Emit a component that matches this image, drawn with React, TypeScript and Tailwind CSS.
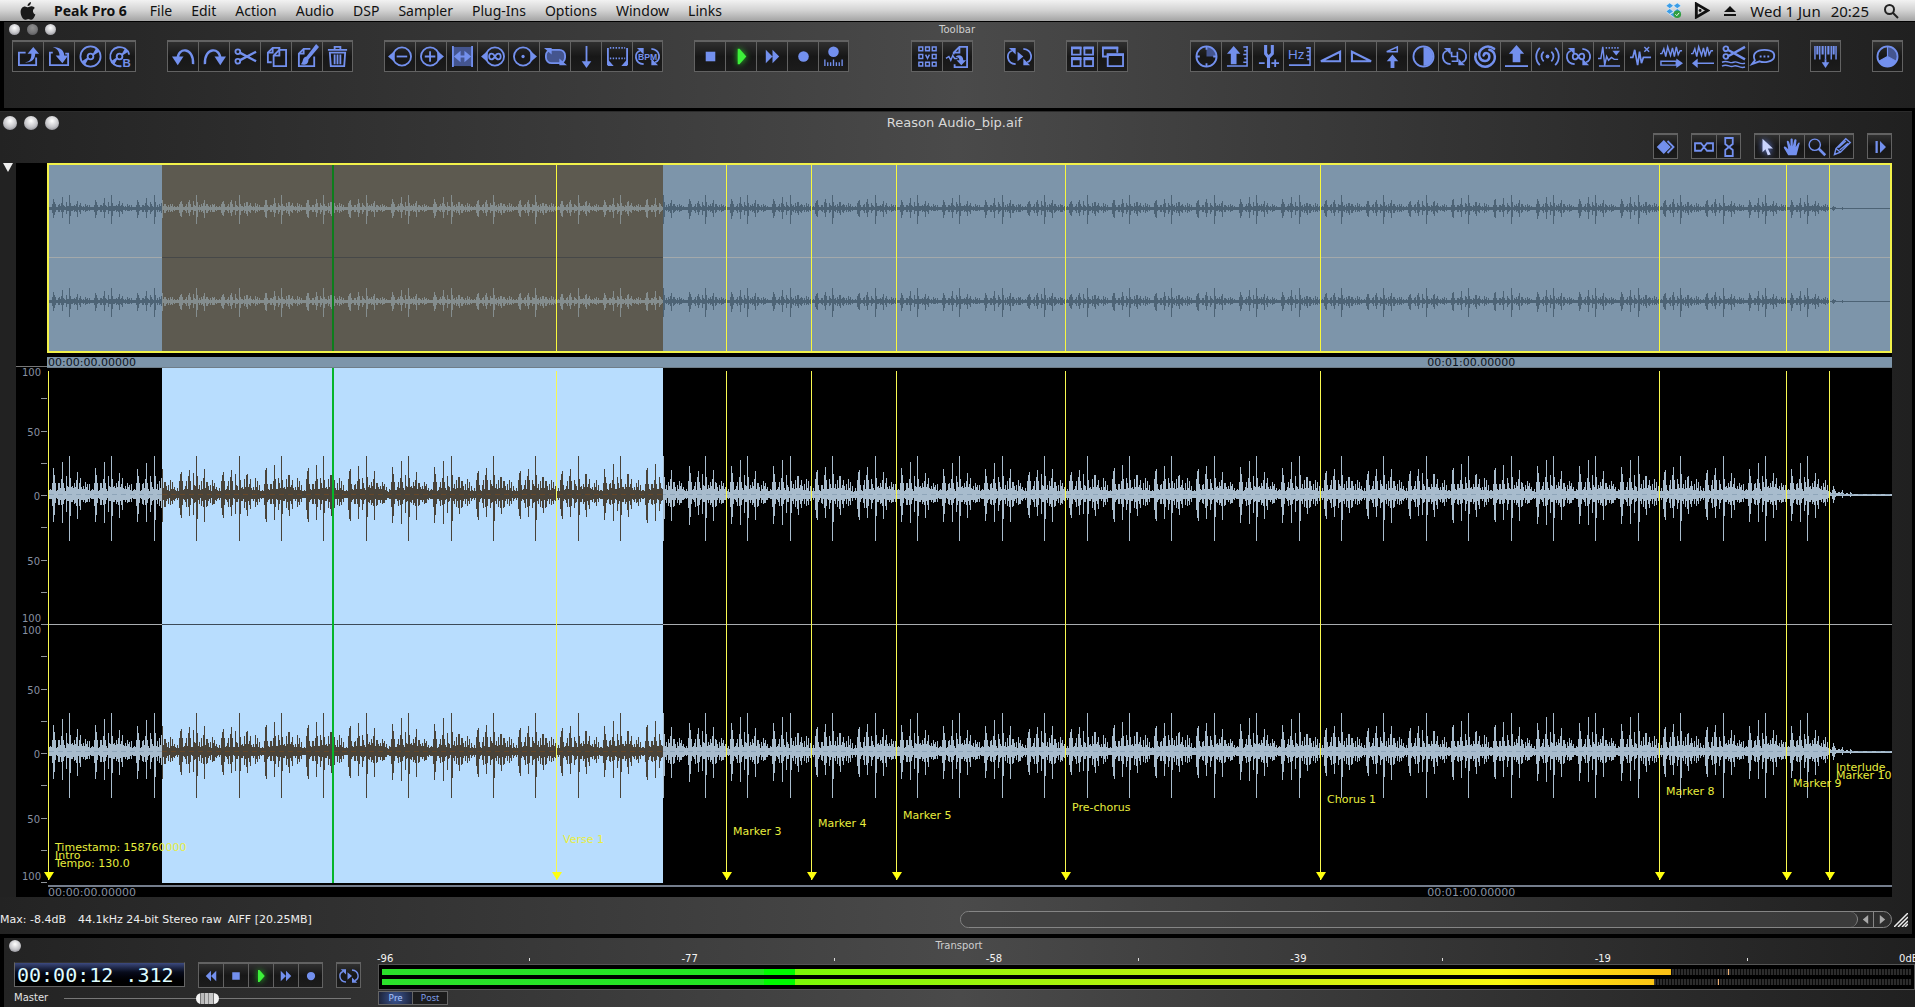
import { useState } from 'react';
import type { ReactNode } from 'react';

interface Marker {
  x: number;
  labels: { text: string; bottom: number }[];
}

interface IconProps {
  name: string;
  className?: string;
}

// Everything on the timeline is measured in these units
const TRACK = 1845;
const SELECTION = { start: 115, end: 616 };
const PLAYHEAD = 286;
const BAR = 42.4;

const markers: Marker[] = [
  {
    x: 1,
    labels: [
      { text: 'Timestamp: 158760000', bottom: 31 },
      { text: 'Intro', bottom: 23 },
      { text: 'Tempo: 130.0', bottom: 15 },
    ],
  },
  { x: 509, labels: [{ text: 'Verse 1', bottom: 39 }] },
  { x: 679, labels: [{ text: 'Marker 3', bottom: 47 }] },
  { x: 764, labels: [{ text: 'Marker 4', bottom: 55 }] },
  { x: 849, labels: [{ text: 'Marker 5', bottom: 63 }] },
  { x: 1018, labels: [{ text: 'Pre-chorus', bottom: 71 }] },
  { x: 1273, labels: [{ text: 'Chorus 1', bottom: 79 }] },
  { x: 1612, labels: [{ text: 'Marker 8', bottom: 87 }] },
  { x: 1739, labels: [{ text: 'Marker 9', bottom: 95 }] },
  {
    x: 1782,
    labels: [
      { text: 'Interlude', bottom: 111 },
      { text: 'Marker 10', bottom: 103 },
    ],
  },
];

// Peak levels of one bar of the loop
const peaksUp = [
  39, 18, 7, 10, 6, 14, 8, 18, 23, 7, 12, 15, 8, 5, 10, 5, 15, 8, 13, 5, 9, 4, 4, 6, 4, 14, 26, 24, 12, 5, 5, 10, 13, 6,
  18, 31, 14, 6, 5, 19, 11, 8, 5,
];
const peaksDown = [
  46, 24, 7, 9, 5, 12, 8, 14, 25, 6, 12, 14, 6, 5, 9, 5, 11, 8, 10, 5, 7, 4, 4, 5, 4, 14, 27, 25, 9, 5, 5, 9, 12, 5, 12,
  27, 11, 5, 5, 18, 9, 7, 5,
];

const wavePath = (from: number, to: number, center: number, scale: number) => {
  let d = '';
  for (let x = Math.max(from, 2); x < to; x++) {
    const phase = Math.floor((((x - 64) % BAR) + BAR) % BAR);
    const wobble = phase === 0 ? 1 : 0.75 + ((x * 7919) % 31) / 80;
    const fade = x < 1782 ? 1 : Math.exp((1782 - x) / 10) * 0.5;
    const up = Math.max(peaksUp[phase] * wobble * fade * scale, 0.5);
    const down = Math.max(peaksDown[phase] * wobble * fade * scale, 0.5);
    d += `M${x + 0.5} ${Math.round(center - up)}V${Math.round(center + down)}`;
  }
  return d;
};

const percent = (x: number) => `${(x / TRACK) * 100}%`;

const loopArrows = (
  <>
    <path d="M8 20C-2 19-2 8 4 6M16 4C26 5 26 16 20 18" />
    <path d="M1 3h7v7zM23 21h-7v-7z" fill="currentColor" stroke="none" />
  </>
);

const infinity = <path d="M12 12c-2-4-6-4-6 0s4 4 6 0 6-4 6 0-4 4-6 0z" />;

const icons: Record<string, ReactNode> = {
  open: (
    <>
      <path d="M9 8H2v13h18v-8" />
      <path d="M7 18c6 0 8-3 8-9h-4l6-7 6 7h-4c0 6-4 10-12 9z" fill="currentColor" stroke="none" />
    </>
  ),
  save: (
    <>
      <path d="M5 8H2v13h19V9h-3" />
      <path d="M5 2c8 0 12 4 12 9h4l-6 8-7-8h4c0-4-2-7-7-9z" fill="currentColor" stroke="none" />
    </>
  ),
  disc: (
    <>
      <circle cx="12" cy="12" r="10.500" />
      <circle cx="12" cy="12" r="3" />
      <path d="M14 10l4-7 3 4-6 4zM10 14l-4 7-3-4 6-4z" fill="currentColor" stroke="none" />
    </>
  ),
  burn: (
    <>
      <path d="M13 22A10 10 0 1 1 21 10" />
      <circle cx="11" cy="12" r="3" />
      <path d="M13 10l4-7 3 4-6 4zM9 14l-4 7-3-4 6-4z" fill="currentColor" stroke="none" />
      <text x="14" y="23" fontSize="12" fontWeight="700" fill="currentColor" stroke="none">B</text>
    </>
  ),
  undo: (
    <>
      <path d="M22 20C23 2 6 2 6 14" strokeWidth="2.500" />
      <path d="M0 12h12l-6 9z" fill="currentColor" stroke="none" />
    </>
  ),
  redo: (
    <>
      <path d="M2 20C1 2 18 2 18 14" strokeWidth="2.500" />
      <path d="M24 12H12l6 9z" fill="currentColor" stroke="none" />
    </>
  ),
  cut: (
    <>
      <circle cx="4" cy="7" r="2.500" />
      <circle cx="4" cy="17" r="2.500" />
      <path d="M6 8l17 9M6 16l17-9" strokeWidth="2.500" />
    </>
  ),
  copy: (
    <>
      <path d="M7 18H3V8l5-5h7v3" />
      <path d="M15 5h7v17H9V11zM15 5v6H9M8 3v5H3" />
    </>
  ),
  paste: (
    <>
      <path d="M15 4H8L3 9v13h16V12M8 4v5H3" />
      <path d="M21-1l3 3-11 13c0 6-5 6-8 5 3-2 1-7 6-8z" fill="currentColor" stroke="none" />
    </>
  ),
  trash: (
    <>
      <path d="M2 5h20M9 5V2h6v3M4 8h16l-1 14H5z" />
      <path d="M9 10v10M12 10v10M15 10v10" />
    </>
  ),
  zoomOut: (
    <>
      <circle cx="13.500" cy="12" r="9.500" />
      <path d="M8 12h11" />
      <path d="M6 6v12l-7-6z" fill="currentColor" stroke="none" />
    </>
  ),
  zoomIn: (
    <>
      <circle cx="10.500" cy="12" r="9.500" />
      <path d="M5 12h11M10.500 6.500v11" />
      <path d="M18 6v12l7-6z" fill="currentColor" stroke="none" />
    </>
  ),
  fit: (
    <>
      <path d="M2 2h20v20H2z" fill="#44558f" stroke="none" />
      <path d="M2 1v22M22 1v22" />
      <path d="M3 12l7-6v5h4V6l7 6-7 6v-5h-4v5z" fill="currentColor" stroke="none" />
    </>
  ),
  zoomLoop: (
    <>
      <circle cx="13.500" cy="12" r="9.500" />
      <path d="M6 6v12l-7-6z" fill="currentColor" stroke="none" />
      <g transform="translate(1.500 0)">{infinity}</g>
    </>
  ),
  zoomPoint: (
    <>
      <circle cx="10.500" cy="12" r="9.500" />
      <circle cx="10.500" cy="12" r="1.700" fill="currentColor" stroke="none" />
      <path d="M18 6v12l7-6z" fill="currentColor" stroke="none" />
    </>
  ),
  loop: (
    <>
      <rect x="2" y="5" width="20" height="14" rx="6" fill="#44558f" />
      <path d="M0 3h8v7zM24 21h-8v-7z" fill="currentColor" stroke="none" />
    </>
  ),
  anchor: (
    <>
      <path d="M12 1v18" />
      <path d="M7 17h10l-5 7z" fill="currentColor" stroke="none" />
    </>
  ),
  region: (
    <>
      <path d="M2 3v18M22 3v18" />
      <path d="M4 3h16M4 14h16" strokeDasharray="1.500 1.500" />
      <path d="M2 15l6 7H2zM22 15l-6 7h6z" fill="currentColor" stroke="none" />
    </>
  ),
  bpm: (
    <>
      {loopArrows}
      <text x="12" y="15.500" fontSize="9" fontWeight="700" textAnchor="middle" fill="currentColor" stroke="none">BPM</text>
    </>
  ),
  stop: <path d="M7 7h10v10H7z" fill="currentColor" stroke="none" />,
  play: <path d="M8 4h2l7 8-7 8H8z" fill="currentColor" stroke="none" />,
  forward: <path d="M5 5l7 7-7 7zM12 5l7 7-7 7z" fill="currentColor" stroke="none" />,
  rewind: <path d="M12 5l-7 7 7 7zM19 5l-7 7 7 7z" fill="currentColor" stroke="none" />,
  record: <circle cx="12" cy="12" r="5.500" fill="currentColor" stroke="none" />,
  recordSettings: (
    <>
      <circle cx="12" cy="7" r="5.500" fill="currentColor" stroke="none" />
      <path d="M3 15v7M6 18v4M9 18v4M12 15v7M15 18v4M18 18v4M21 15v7" strokeWidth="1.400" />
    </>
  ),
  playlist: (
    <>
      <path d="M3 2h4v4H3zM10 2h4v4h-4zM17 2h4v4h-4zM3 10h4v4H3zM17 10h4v4h-4zM3 18h4v4H3zM10 18h4v4h-4zM17 18h4v4h-4z" strokeWidth="1.500" />
      <path d="M10 10l2 4 2-4" strokeWidth="1.500" />
    </>
  ),
  toPlaylist: (
    <>
      <path d="M8 10V8l6-6h8v21H9v-3M14 2v6H8" />
      <path d="M0 14l3-2 2 4 2-5 2 3h3" strokeWidth="1.500" />
      <path d="M10 12c5-3 8 0 8 4h3l-5 5-5-5h3c0-2-1-3-4-4z" fill="currentColor" stroke="none" />
    </>
  ),
  loopPlay: (
    <>
      {loopArrows}
      <path d="M10 7v10l6-5z" fill="currentColor" stroke="none" />
    </>
  ),
  tile: (
    <>
      <path d="M1 3h9v7H1zM14 3h9v7h-9zM1 15h9v7H1zM14 15h9v7h-9z" />
      <path d="M0 3h11M13 3h11M0 14h11M13 14h11" strokeWidth="3" />
    </>
  ),
  stack: (
    <>
      <path d="M8 12H2V3h15v5" />
      <path d="M7 10h16v12H7z" />
      <path d="M1 3h17M6 10h18" strokeWidth="3" />
    </>
  ),
  clock: (
    <>
      <path d="M12 12V2a10 10 0 0 1 10 10z" fill="#44558f" stroke="none" />
      <circle cx="12" cy="12" r="10.500" />
      <path d="M12 1v4M12 19v4M1 12h4M19 12h4" />
    </>
  ),
  gain: (
    <>
      <path d="M8 1l7 8h-4v11H5V9H1z" fill="currentColor" stroke="none" />
      <path d="M1 22h21V1M18 2h4M19 6h3M18 10h4M19 14h3M18 18h4" strokeWidth="1.600" />
    </>
  ),
  pitch: (
    <>
      <path d="M9 0v9l3 4 4-4V0M12 12v12" strokeWidth="3.200" />
      <path d="M2 19h6M15 19h8M19 15v8" />
    </>
  ),
  rate: (
    <>
      <text x="0" y="15" fontSize="14" fill="currentColor" stroke="none">Hz</text>
      <path d="M1 21h22V2M19 3h4M20 7h3M19 11h4M20 15h3" strokeWidth="1.600" />
    </>
  ),
  fadeIn: <path d="M2 17h20V7z" strokeWidth="2.200" />,
  fadeOut: <path d="M22 17H2V7z" strokeWidth="2.200" />,
  mix: (
    <>
      <path d="M6 7h11V2z" strokeWidth="1.600" />
      <path d="M12 10l6 7h-4v7h-4v-7H6z" fill="currentColor" stroke="none" />
    </>
  ),
  invert: (
    <>
      <circle cx="12" cy="12" r="10.500" />
      <path d="M12 2a10 10 0 0 1 0 20z" fill="currentColor" stroke="none" />
    </>
  ),
  crossfade: (
    <>
      {loopArrows}
      <path d="M9 7v5h6V7M15 12v5H9" strokeWidth="1.700" />
    </>
  ),
  swirl: (
    <g strokeWidth="2.600" strokeLinecap="round">
      <path d="M21 4C13-2 3 5 6 13c2 5 10 5 10-1 0-4-5-5-6-1" />
      <path d="M2 9c-3 9 7 17 15 12 7-5 6-14-1-16" />
    </g>
  ),
  normalize: (
    <>
      <path d="M12 0l8 9h-4v9H8V9H4z" fill="currentColor" stroke="none" />
      <path d="M0 22h24" />
    </>
  ),
  reverb: (
    <>
      <circle cx="12" cy="12" r="2" fill="currentColor" stroke="none" />
      <path d="M8 7c-3 3-3 7 0 10M16 7c3 3 3 7 0 10M4 3c-5 5-5 13 0 18M20 3c5 5 5 13 0 18" />
    </>
  ),
  loopTune: (
    <>
      {loopArrows}
      {infinity}
    </>
  ),
  threshold: (
    <>
      <path d="M0 14h3l2-12 2 19 2-9 2 4 3-3 3 2h4M1 22h22" strokeWidth="1.500" />
      <path d="M8 3h15" strokeDasharray="1.500 1.500" />
      <path d="M15 6h8l-4 5z" fill="currentColor" stroke="none" />
    </>
  ),
  repair: (
    <>
      <path d="M1 13h3l2-8 3 16 2-14 2 12 2-6h8" strokeWidth="1.800" />
      <path d="M16 2l5 5M21 2l-5 5" strokeWidth="1.500" />
    </>
  ),
  waveRight: (
    <>
      <path d="M0 9h2l2-5 2 8 2-10 3 9 2-8 2 9 2-10 2 8 2-4h2M1 17h16v4H1z" strokeWidth="1.500" />
      <path d="M17 14l7 5-7 5z" fill="currentColor" stroke="none" />
    </>
  ),
  waveLeft: (
    <>
      <path d="M0 9h2l2-5 2 8 2-10 3 9 2-8 2 9 2-10 2 8 2-4h2M6 19h18" strokeWidth="1.500" />
      <path d="M7 14v10l-6-5z" fill="currentColor" stroke="none" />
    </>
  ),
  strip: (
    <>
      <circle cx="4" cy="4" r="2.500" />
      <circle cx="4" cy="12" r="2.500" />
      <path d="M6 5l18 10M6 12l18-10" strokeWidth="2.500" />
      <path d="M0 18c6-3 8 2 12 0s6 3 12 1M0 22c6-3 8 2 12 0s6 3 12 1" strokeWidth="1.500" />
    </>
  ),
  speech: (
    <>
      <path d="M3 16c-3-6 1-11 10-11s11 4 10 8-10 6-15 4l-8 3z" />
      <path d="M8 12h2M12 12h2M16 12h2" />
    </>
  ),
  sampler: (
    <>
      <path d="M1 1v14M6 1v14M12 1v14M18 1v14M23 1v14" strokeWidth="1.500" />
      <path d="M3.500 1v9M9 1v9M15 1v9M20.500 1v9" strokeWidth="2.200" />
      <path d="M12 15v4" />
      <path d="M8 18h8l-4 6z" fill="currentColor" stroke="none" />
    </>
  ),
  usage: (
    <>
      <path d="M12 12V2a10 10 0 0 1 9 15z" fill="#44558f" stroke="none" />
      <path d="M12 12l9 5a10 10 0 0 1-18 0z" fill="currentColor" stroke="none" />
      <circle cx="12" cy="12" r="10.500" />
      <path d="M12 12V2M12 12l9 5M12 12l-9 5" strokeWidth="1.200" />
    </>
  ),
  dither: (
    <>
      <path d="M9 4l8 8-8 8-8-8z" fill="currentColor" />
      <path d="M14 4l8 8-8 8" strokeWidth="2.500" />
    </>
  ),
  linkH: <path d="M12 12L8 7H0v10h8l8-10h8v10h-8z" strokeWidth="2.400" />,
  linkV: <path d="M12 12L7 8V0h10v8L7 16v8h10v-8z" strokeWidth="2.400" />,
  pointer: <path d="M6 1l14 13h-7l4 8-4 1-3-8-4 4z" fill="currentColor" stroke="none" />,
  hand: (
    <path
      d="M7 23L1 13c0-2 2-2 3-1l3 3L5 5c0-2 2-2 3 0l2 6V2c0-2 3-2 3 0v9l2-8c0-2 3-2 3 0l-1 9 3-5c1-2 3-1 2 1l-4 15z"
      fill="currentColor"
      stroke="none"
    />
  ),
  zoom: (
    <>
      <circle cx="9" cy="9" r="7.500" />
      <path d="M14 14l9 9" strokeWidth="3.500" />
    </>
  ),
  pencil: <path d="M2 22l2-8L17 1l6 5-13 13zM4 14l6 5M7 13l10-9M9 16l11-9" />,
  collapse: <path d="M6 4h3v16H6zM12 4l8 8-8 8z" fill="currentColor" stroke="none" />,
};

const fileTools = ['open', 'save', 'disc', 'burn'];
const editTools = ['undo', 'redo', 'cut', 'copy', 'paste', 'trash'];
const viewTools = ['zoomOut', 'zoomIn', 'fit', 'zoomLoop', 'zoomPoint', 'loop', 'anchor', 'region', 'bpm'];
const playTools = ['stop', 'play', 'forward', 'record', 'recordSettings'];
const dspTools = [
  'clock', 'gain', 'pitch', 'rate', 'fadeIn', 'fadeOut', 'mix', 'invert', 'crossfade', 'swirl', 'normalize', 'reverb',
  'loopTune', 'threshold', 'repair', 'waveRight', 'waveLeft', 'strip', 'speech',
];

const menus = ['File', 'Edit', 'Action', 'Audio', 'DSP', 'Sampler', 'Plug-Ins', 'Options', 'Window', 'Links'];

function Icon({ name, className = '' }: IconProps) {
  return (
    <svg
      viewBox="0 0 24 24"
      className={`shrink-0 overflow-visible ${className}`}
      fill="none"
      stroke="currentColor"
      strokeWidth="1.900"
      fontFamily="Liberation Sans, sans-serif"
      aria-hidden="true"
    >
      {icons[name]}
    </svg>
  );
}

function ToolGroup({ names, small = false }: { names: string[]; small?: boolean }) {
  return (
    <div className="flex shrink-0">
      {names.map((name) => (
        <button
          key={name}
          aria-label={name}
          className={`flex items-center justify-center border-t-2 border-b border-l border-[#626262] bg-gradient-to-b from-[#303030] via-[#171717] to-[#1c1c1c] last:border-r ${
            small ? 'h-[26px] w-[25px]' : 'h-8 w-[31px]'
          } ${
            name === 'play'
              ? 'text-[#3df03a] [&>svg]:drop-shadow-[0_0_3px_#2bd02b]'
              : name === 'pointer'
              ? 'text-[#c9d4ff] [&>svg]:drop-shadow-[0_0_3px_#6f8cf0]'
              : 'text-[#7390ee]'
          }`}
        >
          <Icon name={name} className={small ? 'size-[18px]' : 'size-[23px]'} />
        </button>
      ))}
    </div>
  );
}

function Light({ className = '' }: { className?: string }) {
  return (
    <button
      aria-label="Window control"
      className={`rounded-full bg-[radial-gradient(circle_at_50%_35%,#ffffff,#c4c4c8_55%,#707078)] ${className}`}
    />
  );
}

function MenuBar() {
  return (
    <header className="flex h-[22px] items-center border-b border-black bg-gradient-to-b from-[#f2f2f2] via-[#d2d2d2] to-[#a4a4a4] pr-4 pl-5 text-[14px] leading-5 whitespace-nowrap text-[#111]">
      <svg viewBox="0 0 16 18" className="mr-[18px] h-[18px] w-4" fill="#1a1a1a" aria-hidden="true">
        <path d="M11 0c0 2-1 4-3.500 4C7.500 2 9 .5 11 0zM8 5.200c1 0 2-1 3.700-.9 1.300.1 2.400.7 3.100 1.700-2.700 1.700-2.300 5.300.6 6.500C14.600 15 13 17.700 11.500 17.700c-1.300 0-1.700-.8-3.200-.8s-2 .8-3.200.8C3 17.700.6 13.600.6 10 .6 6.500 2.700 4.400 4.900 4.400c1.300 0 2.300.8 3.100.8z" />
      </svg>
      <nav className="flex items-center gap-[19px]">
        <button className="mr-1 font-bold">Peak Pro 6</button>
        {menus.map((menu) => (
          <button key={menu}>{menu}</button>
        ))}
      </nav>
      <div className="ml-auto flex items-center">
        <svg viewBox="0 0 18 18" className="mr-3 size-[17px]" aria-hidden="true">
          <path d="M5 1l4 3-4 3-4-3zM13 1l4 3-4 3-4-3zM5 7l4 3-4 3-4-3zM13 7l4 3-4 3-4-3zM5 13l4-2 4 2-4 3z" fill="#3b9de6" stroke="#e6f4ff" strokeWidth=".6" />
          <circle cx="13" cy="13" r="4" fill="#2f9e3f" />
          <path d="M11 13l1.500 1.500L15 11.500" stroke="#fff" fill="none" />
        </svg>
        <svg viewBox="0 0 16 18" className="mr-[14px] h-[17px] w-4" aria-hidden="true">
          <path d="M2 2l12 7-12 7z" fill="none" stroke="#111" strokeWidth="3" />
          <circle cx="6" cy="9" r="1.500" fill="#111" />
        </svg>
        <svg viewBox="0 0 12 12" className="mr-[14px] size-3" fill="#111" aria-hidden="true">
          <path d="M6 1l6 6H0zM0 9h12v2H0z" />
        </svg>
        <span className="mr-[14px] text-[15px]">
          Wed 1 Jun<span className="ml-[10px]">20:25</span>
        </span>
        <button aria-label="Search">
          <svg viewBox="0 0 16 16" className="size-4" fill="none" stroke="#222" strokeWidth="2" aria-hidden="true">
            <circle cx="6.500" cy="6.500" r="4.500" />
            <path d="M10 10l5 5" />
          </svg>
        </button>
      </div>
    </header>
  );
}

function ToolbarWindow() {
  return (
    <section className="ml-1 h-[86px] overflow-hidden bg-gradient-to-r from-[#232323] via-[#4a4a4a] to-[#202020]">
      <div className="grid h-[18px] grid-cols-3 items-center pr-[10px] pb-[3px] pl-[5px]">
        <div className="flex gap-[7px]">
          <Light className="size-[11px]" />
          <Light className="size-[11px] opacity-50" />
          <Light className="size-[11px]" />
        </div>
        <h2 className="text-center font-['DejaVu_Sans',sans-serif] text-[10px] leading-3 text-[#cfcfcf]">Toolbar</h2>
      </div>
      <div className="flex gap-[31px] pr-3 pl-2">
        <ToolGroup names={fileTools} />
        <ToolGroup names={editTools} />
        <ToolGroup names={viewTools} />
        <ToolGroup names={playTools} />
        <div className="ml-[31px] flex gap-[31px]">
          <ToolGroup names={['playlist', 'toPlaylist']} />
          <ToolGroup names={['loopPlay']} />
          <ToolGroup names={['tile', 'stack']} />
        </div>
        <div className="ml-auto flex gap-[31px]">
          <ToolGroup names={dspTools} />
          <ToolGroup names={['sampler']} />
          <ToolGroup names={['usage']} />
        </div>
      </div>
    </section>
  );
}

function Overview() {
  return (
    <div className="relative h-[190px] bg-[#7d95aa]">
      <svg viewBox={`0 0 ${TRACK} 190`} preserveAspectRatio="none" className="absolute inset-0 size-full" shapeRendering="crispEdges" aria-hidden="true">
        <rect x={SELECTION.start} width={SELECTION.end - SELECTION.start} height="190" fill="#5d5a50" />
        <path d={`M0 94.500H${TRACK}`} stroke="#a3a9ab" />
        <path d={`M${SELECTION.start} 94.500H${SELECTION.end}`} stroke="#464848" />
        {[45.5, 138.5].map((center) => (
          <g key={center}>
            <path d={`M2 ${center}H${TRACK}`} stroke="#4d6375" />
            <path d={wavePath(0, SELECTION.start, center, 0.34)} stroke="#4d6375" />
            <path d={wavePath(SELECTION.start, SELECTION.end, center, 0.34)} stroke="#848d8e" />
            <path d={wavePath(SELECTION.end, TRACK, center, 0.34)} stroke="#4d6375" />
          </g>
        ))}
      </svg>
      {markers.slice(1).map((marker) => (
        <div key={marker.x} className="absolute inset-y-0 w-px bg-[#f8f83c]" style={{ left: percent(marker.x) }} />
      ))}
      <div className="absolute inset-y-0 w-[2px] -translate-x-px bg-[#0c7d1c]" style={{ left: percent(PLAYHEAD) }} />
      <div className="absolute inset-0 border-2 border-[#f2f24a]" />
    </div>
  );
}

function WaveEditor() {
  return (
    <div className="relative min-h-[360px] flex-1 bg-black">
      <svg viewBox={`0 0 ${TRACK} 515`} preserveAspectRatio="none" className="absolute inset-0 size-full" shapeRendering="crispEdges" aria-hidden="true">
        <rect x={SELECTION.start} width={SELECTION.end - SELECTION.start} height="515" fill="#b8ddfe" />
        <path d={`M0 256.500H${TRACK}`} stroke="#a9adb0" />
        <path d={`M${SELECTION.start} 256.500H${SELECTION.end}`} stroke="#3c4a58" />
        {[126.5, 383.5].map((center) => (
          <g key={center}>
            <path d={`M2 ${center}H${TRACK}`} stroke="#aabdce" strokeWidth="2" />
            <path d={wavePath(0, SELECTION.start, center, 1)} stroke="#a8bccd" />
            <path d={wavePath(SELECTION.start, SELECTION.end, center, 1)} stroke="#494339" />
            <path d={wavePath(SELECTION.end, TRACK, center, 1)} stroke="#a8bccd" />
            <path d={`M2 ${center}H${TRACK}`} stroke="#8ea5b9" strokeDasharray="5 4" />
            <path d={`M${SELECTION.start} ${center}H${SELECTION.end}`} stroke="#494339" />
            <path d={`M${SELECTION.start} ${center}H${SELECTION.end}`} stroke="#654729" strokeDasharray="5 4" />
          </g>
        ))}
      </svg>
      <div className="absolute inset-y-0 w-[2px] -translate-x-px bg-[#05b52a]" style={{ left: percent(PLAYHEAD) }} />
      {markers.map((marker) => (
        <div key={marker.x} className="absolute top-[3px] bottom-[3px] w-px bg-[#f8f850]" style={{ left: percent(marker.x) }}>
          <div className="absolute bottom-0 -left-1 border-x-[5px] border-t-8 border-x-transparent border-t-[#ffff10]" />
          {marker.labels.map((label) => (
            <span
              key={label.text}
              className="absolute left-[7px] font-['DejaVu_Sans',sans-serif] text-[11px] leading-3 whitespace-nowrap text-[#e8ee3e]"
              style={{ bottom: label.bottom - 5 }}
            >
              {label.text}
            </span>
          ))}
        </div>
      ))}
    </div>
  );
}

// One channel of the vertical level scale, from 100 down to 100
function LevelScale() {
  return (
    <div className="relative flex flex-1 flex-col items-end font-['DejaVu_Sans',sans-serif] text-[10px] leading-3">
      {['', '50', '', '0', '', '50', '', ''].map((label, index) => (
        <div key={index} className="relative flex w-full flex-1 items-end justify-end">
          <span className="absolute right-[7px] -bottom-[7px]">{label}</span>
          <span className="h-px w-[6px] bg-[#8f959c]" />
        </div>
      ))}
      <span className="absolute top-0 right-[6px]">100</span>
      <span className="absolute right-[6px] bottom-0">100</span>
    </div>
  );
}

function TimeLabels() {
  return (
    <div className="flex font-['DejaVu_Sans',sans-serif] text-[11px] leading-[11px]">
      <span className="w-[74.8%]">00:00:00.00000</span>
      <span>00:01:00.00000</span>
    </div>
  );
}

function DocumentWindow() {
  const [open, setOpen] = useState(true);

  return (
    <section className="mr-[3px] flex flex-1 flex-col bg-gradient-to-r from-[#232323] via-[#4a4a4a] to-[#202020]">
      <div className="grid h-[22px] grid-cols-3 items-center border-t border-[#2c2c2c] pr-[6px] pl-[3px]">
        <div className="flex gap-[7px]">
          <Light className="size-[14px]" />
          <Light className="size-[14px]" />
          <Light className="size-[14px]" />
        </div>
        <h1 className="text-center font-['DejaVu_Sans',sans-serif] text-[13px] leading-4 text-[#d8d8d8]">Reason Audio_bip.aif</h1>
      </div>
      <div className="flex h-[30px] justify-end gap-[13px] pr-5">
        <ToolGroup small names={['dither']} />
        <ToolGroup small names={['linkH', 'linkV']} />
        <ToolGroup small names={['pointer', 'hand', 'zoom', 'pencil']} />
        <ToolGroup small names={['collapse']} />
      </div>

      <div className="flex flex-1">
        <div className="w-4 bg-[#222]">
          <button aria-label="Toggle overview" onClick={() => setOpen(!open)} className="block pl-[3px]">
            <svg viewBox="0 0 10 10" className="size-[10px]" fill="#eee" aria-hidden="true">
              <path d="M0 0h10L5 9z" />
            </svg>
          </button>
        </div>
        <div className="flex w-[31px] flex-col bg-black text-[#8790a0]">
          {open && <div className="h-[190px]" />}
          <div className="h-[14px] border-b border-[#777]" />
          <LevelScale />
          <LevelScale />
          <div className="h-[14px]" />
        </div>
        <div className="flex min-w-0 flex-1 flex-col">
          {open && <Overview />}
          <div className="h-[15px] border-t-4 border-b border-t-black border-b-[#6f7d88] bg-[#7d95aa] pl-px text-[#0d1420]">
            <TimeLabels />
          </div>
          <WaveEditor />
          <div className="h-[14px] bg-black pt-[2px] pl-px text-[#8790a0]">
            <div className="border-t-2 border-[#747d8c]" />
            <TimeLabels />
          </div>
        </div>
        <div className="w-5" />
      </div>

      <footer className="flex h-[37px] items-center pt-2 pr-1">
        <p className="w-1/2 font-['DejaVu_Sans',sans-serif] text-[11px] leading-4 whitespace-pre text-[#eee]">
          Max: -8.4dB<span className="ml-3">44.1kHz 24-bit Stereo raw</span>
          <span className="ml-[6px]">AIFF [20.25MB]</span>
        </p>
        <div className="ml-[6px] flex h-[17px] flex-1 items-stretch rounded-full border border-[#858585] bg-[#3a3a3a]/50">
          <div className="flex-1 rounded-full border-r border-[#858585] bg-[#454545]/60" />
          <button aria-label="Scroll left" className="w-[15px] text-[#a8a8a8]">
            <svg viewBox="0 0 10 10" className="mx-auto size-[9px]" fill="currentColor" aria-hidden="true">
              <path d="M8 0v10L2 5z" />
            </svg>
          </button>
          <button aria-label="Scroll right" className="w-[18px] border-l border-[#858585] text-[#a8a8a8]">
            <svg viewBox="0 0 10 10" className="mx-auto size-[9px]" fill="currentColor" aria-hidden="true">
              <path d="M2 0v10l6-5z" />
            </svg>
          </button>
        </div>
        <svg viewBox="0 0 14 14" className="ml-[2px] size-[14px]" stroke="#eee" strokeWidth="1.500" aria-hidden="true">
          <path d="M0 14L14 0M4 14L14 4M8 14l6-6M11 14l3-3" />
        </svg>
      </footer>
    </section>
  );
}

function MeterBar({ level, peak }: { level: number; peak: number }) {
  return (
    <div className="relative h-[6px] bg-[repeating-linear-gradient(90deg,#2c2c2c_0_2px,#0a0a0a_2px_3px)]">
      <div
        className="size-full bg-[linear-gradient(90deg,#2be02b_0%,#22e622_25%,#00fa00_25%,#00fa00_27%,#7cf808_27%,#ccf010_59%,#f8f810_73%,#ffdc10_78%,#f8b818_86%,#f8a818_100%)]"
        style={{ clipPath: `inset(0 ${100 - level}% 0 0)` }}
      />
      <div className="absolute inset-y-0 w-px bg-[#f0b070]" style={{ left: `${peak}%` }} />
    </div>
  );
}

function TransportWindow() {
  const [volume, setVolume] = useState(50);

  return (
    <section className="ml-1 h-[69px] overflow-hidden bg-gradient-to-r from-[#232323] via-[#4a4a4a] to-[#202020]">
      <div className="grid h-4 grid-cols-3 items-center pr-[6px] pl-[5px]">
        <Light className="size-3" />
        <h2 className="text-center font-['DejaVu_Sans',sans-serif] text-[10px] leading-3 text-[#cfcfcf]">Transport</h2>
      </div>
      <div className="flex">
        <div className="w-[374px] shrink-0 pt-2 pl-[10px]">
          <div className="flex">
            <output className="mr-[13px] flex h-[25px] w-[171px] items-center border border-t-[#333] border-[#666] bg-gradient-to-b from-[#3d4b80] via-[#080c1c] via-40% to-black pl-[2px] font-['DejaVu_Sans_Mono',monospace] text-[20px] leading-6 whitespace-pre text-[#dffcff]">
              00:00:12 .312
            </output>
            <ToolGroup small names={['rewind', 'stop', 'play', 'forward', 'record']} />
            <div className="ml-[13px]">
              <ToolGroup small names={['loopPlay']} />
            </div>
          </div>
          <div className="flex h-5 items-center">
            <label htmlFor="master" className="w-[50px] font-['DejaVu_Sans',sans-serif] text-[10px] leading-4 text-[#e2e2e2]">
              Master
            </label>
            <input
              id="master"
              type="range"
              value={volume}
              onChange={(e) => setVolume(Number(e.target.value))}
              className="h-3 w-[287px] appearance-none bg-[linear-gradient(#777,#777)] bg-[length:100%_1px] bg-center bg-no-repeat [&::-webkit-slider-thumb]:h-[11px] [&::-webkit-slider-thumb]:w-[23px] [&::-webkit-slider-thumb]:appearance-none [&::-webkit-slider-thumb]:rounded-full [&::-webkit-slider-thumb]:bg-[linear-gradient(90deg,#f4f4f4_0_4px,#777_4px_5px,#bbb_5px_8px,#777_8px_9px,#c8c8c8_9px_12px,#888_12px_13px,#c8c8c8_13px_17px,#777_17px_18px,#f4f4f4_18px)]"
            />
          </div>
        </div>
        <div className="min-w-0 flex-1">
          <div className="-ml-px flex h-[10px] font-['DejaVu_Sans',sans-serif] text-[10px] leading-[10px] text-[#f4f4f4]">
            {['-96', '-77', '-58', '-39', '-19'].map((db) => (
              <div key={db} className="flex flex-1 items-center">
                <span className="w-1/2">{db}</span>
                <span className="h-[3px] w-px bg-[#ddd]" />
              </div>
            ))}
            <span className="w-4 shrink-0 overflow-hidden">0dB</span>
          </div>
          <div className="flex h-[26px] flex-col justify-center gap-1 border border-[#555] bg-black px-[3px]">
            <MeterBar level={84.3} peak={88} />
            <MeterBar level={83.2} peak={87.4} />
          </div>
          <div className="mt-px flex text-[9px] leading-3 text-[#7f9fe8]">
            <button className="w-[35px] border border-[#666] bg-[radial-gradient(circle,#3c5796,#1c2236)] text-[#a9c4ff]">Pre</button>
            <button className="w-[35px] border border-l-0 border-[#666] bg-[#1c1c1c]">Post</button>
          </div>
        </div>
      </div>
    </section>
  );
}

export default function App() {
  return (
    <div className="flex min-h-screen flex-col bg-black font-['Noto_Sans','Open_Sans',sans-serif]">
      <MenuBar />
      <ToolbarWindow />
      <main className="flex flex-1 flex-col pt-[3px] pb-1">
        <DocumentWindow />
      </main>
      <TransportWindow />
    </div>
  );
}
